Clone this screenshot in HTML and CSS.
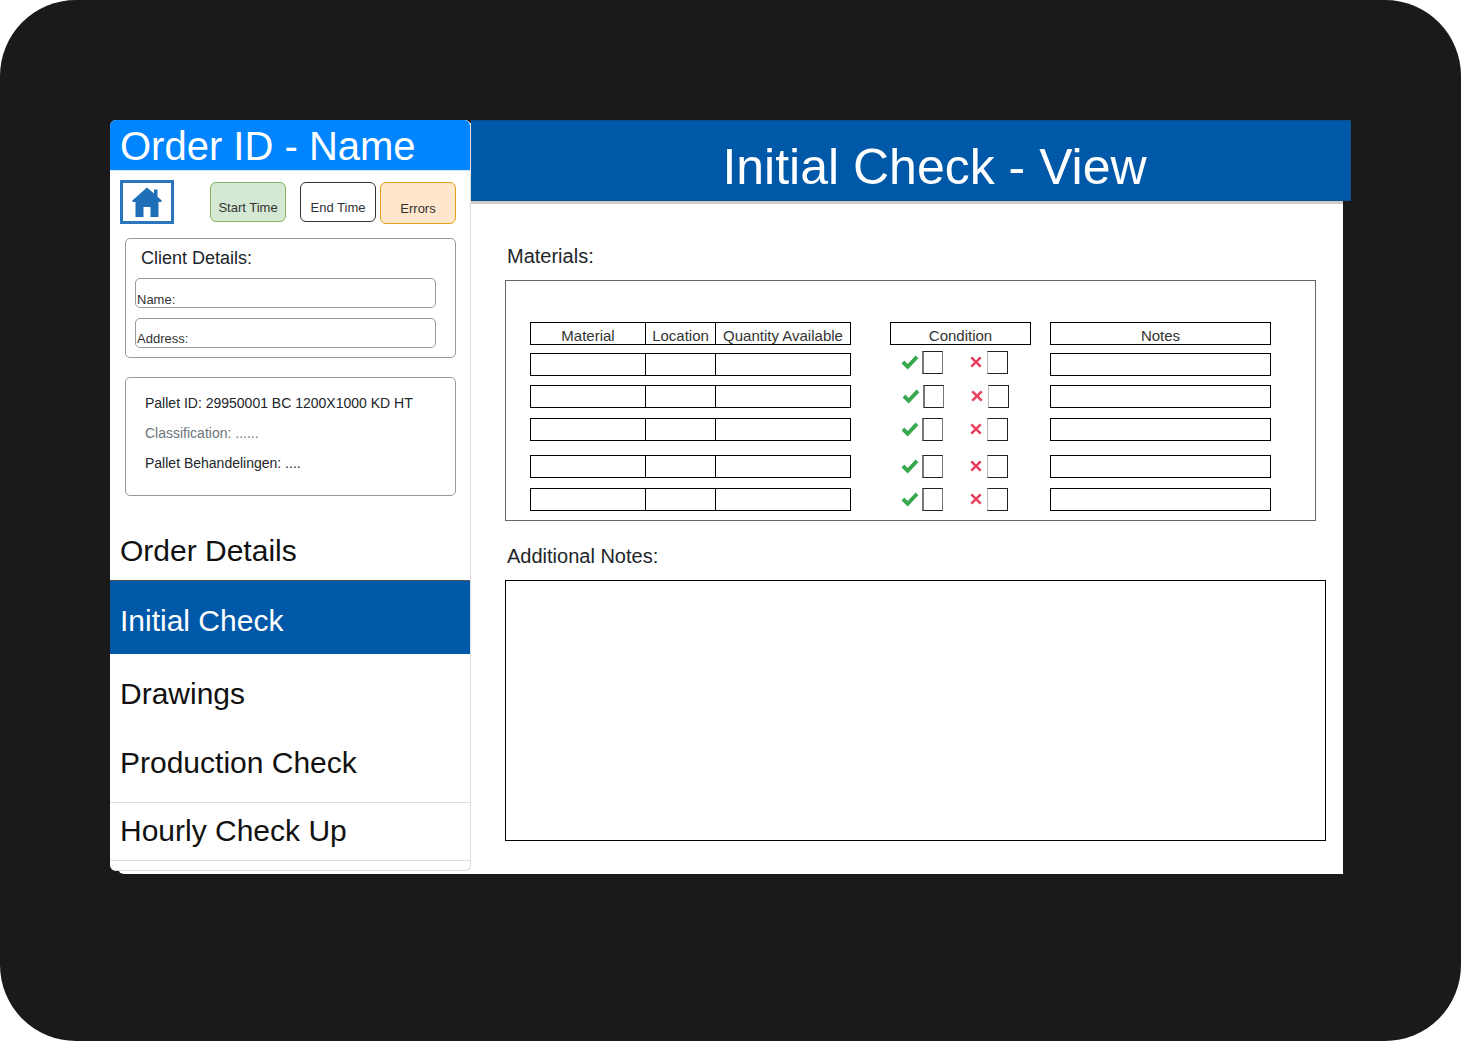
FILE: index.html
```html
<!DOCTYPE html>
<html lang="en">
<head>
    <meta charset="UTF-8">
    <meta name="viewport" content="width=device-width, initial-scale=1.0">
    <title>Initial Check - View</title>
    <link rel="stylesheet" href="styles.css">
</head>
<body>
    <svg class="icon-defs" width="0" height="0" aria-hidden="true">
        <symbol id="icon-check" viewBox="0 0 18 15">
            <path d="M.6 8.4 3.2 5.6 6.7 9 14.6.6 17.4 3.3 6.7 14.6Z"/>
        </symbol>
        <symbol id="icon-cross" viewBox="0 0 12 12">
            <path d="M2.2.4 6 4.2 9.8.4 11.6 2.2 7.8 6 11.6 9.8 9.8 11.6 6 7.8 2.2 11.6.4 9.8 4.2 6 .4 2.2Z"/>
        </symbol>
    </svg>

    <div class="screen">
        <div class="app">
            <!-- Sidebar -->
            <aside class="sidebar">
                <div class="order-title">Order ID - Name</div>

                <div class="toolbar">
                    <a class="home-btn" href="#" aria-label="Home">
                        <svg viewBox="0 0 30 30" width="30" height="30">
                            <path fill="#1f6fb8" d="M15 .5 22 6.6V2.5H25.5V9.7L30 13.8 29 15H26.5V30H18.5V20H11.5V30H3.5V15H1L0 13.8Z"/>
                        </svg>
                    </a>
                    <div class="time-btn start">Start Time</div>
                    <div class="time-btn end">End Time</div>
                    <div class="time-btn errors">Errors</div>
                </div>

                <section class="client-box">
                    <div class="client-title">Client Details:</div>
                    <div class="client-field">Name:</div>
                    <div class="client-field">Address:</div>
                </section>

                <section class="pallet-box">
                    <p>Pallet ID: 29950001 BC 1200X1000 KD HT</p>
                    <p class="muted">Classification: ......</p>
                    <p>Pallet Behandelingen: ....</p>
                </section>

                <nav class="side-nav">
                    <a class="nav-item order" href="#">Order Details</a>
                    <a class="nav-item initial active" href="#">Initial Check</a>
                    <a class="nav-item drawings" href="#">Drawings</a>
                    <a class="nav-item production" href="#">Production Check</a>
                    <a class="nav-item hourly" href="#">Hourly Check Up</a>
                </nav>
            </aside>

            <!-- Main content -->
            <main class="main">
                <h1 class="page-title">Initial Check - View</h1>

                <h2 class="section-label first">Materials:</h2>
                <div class="materials-box">
                    <div class="row head">
                        <div class="cols">
                            <div class="cell c-material">Material</div>
                            <div class="cell c-location">Location</div>
                            <div class="cell c-qty">Quantity Available</div>
                        </div>
                        <div class="cell condition-head">Condition</div>
                        <div class="cell notes">Notes</div>
                    </div>

                    <div class="row">
                        <div class="cols"><div class="cell c-material"></div><div class="cell c-location"></div><div class="cell c-qty"></div></div>
                        <div class="condition lifted">
                            <svg class="tick"><use href="#icon-check"/></svg><span class="box"></span>
                            <svg class="cross"><use href="#icon-cross"/></svg><span class="box"></span>
                        </div>
                        <div class="cell notes"></div>
                    </div>
                    <div class="row">
                        <div class="cols"><div class="cell c-material"></div><div class="cell c-location"></div><div class="cell c-qty"></div></div>
                        <div class="condition nudged">
                            <svg class="tick"><use href="#icon-check"/></svg><span class="box"></span>
                            <svg class="cross"><use href="#icon-cross"/></svg><span class="box"></span>
                        </div>
                        <div class="cell notes"></div>
                    </div>
                    <div class="row">
                        <div class="cols"><div class="cell c-material"></div><div class="cell c-location"></div><div class="cell c-qty"></div></div>
                        <div class="condition">
                            <svg class="tick"><use href="#icon-check"/></svg><span class="box"></span>
                            <svg class="cross"><use href="#icon-cross"/></svg><span class="box"></span>
                        </div>
                        <div class="cell notes"></div>
                    </div>
                    <div class="row">
                        <div class="cols"><div class="cell c-material"></div><div class="cell c-location"></div><div class="cell c-qty"></div></div>
                        <div class="condition">
                            <svg class="tick"><use href="#icon-check"/></svg><span class="box"></span>
                            <svg class="cross"><use href="#icon-cross"/></svg><span class="box"></span>
                        </div>
                        <div class="cell notes"></div>
                    </div>
                    <div class="row">
                        <div class="cols"><div class="cell c-material"></div><div class="cell c-location"></div><div class="cell c-qty"></div></div>
                        <div class="condition">
                            <svg class="tick"><use href="#icon-check"/></svg><span class="box"></span>
                            <svg class="cross"><use href="#icon-cross"/></svg><span class="box"></span>
                        </div>
                        <div class="cell notes"></div>
                    </div>
                </div>

                <h2 class="section-label second">Additional Notes:</h2>
                <div class="notes-box"></div>
            </main>
        </div>
    </div>
</body>
</html>
```

FILE: styles.css
```css
* {
    box-sizing: border-box;
}

html,
body {
    margin: 0;
    background-color: #fff;
}

body {
    font-family: "Liberation Sans", Arial, sans-serif;
    color: #212529;
}

a {
    color: inherit;
    text-decoration: none;
}

.icon-defs {
    position: absolute;
}

.screen {
    width: 1461px;
    height: 1041px;
    padding: 120px 0 0 110px;
    background-color: #1a1a1a;
    border-radius: 76px;
    overflow: hidden;
}

.app {
    display: flex;
    align-items: flex-start;
}

/* Sidebar */
.sidebar {
    width: 361px;
    height: 751px;
    flex: none;
    display: flex;
    flex-direction: column;
    background-color: #fff;
    border-right: 1px solid #ddd;
    border-bottom: 1px solid #ddd;
    border-radius: 6px;
    box-shadow: 8px 3px 0 #fff;
}

.order-title {
    height: 51px;
    padding-left: 10px;
    font-size: 40px;
    line-height: 52px;
    color: #fff;
    background-color: #0085ff;
    border-radius: 6px 6px 0 0;
    border-bottom: 1px solid #cfe6fb;
}

.toolbar {
    display: flex;
    align-items: flex-start;
    height: 67px;
    padding: 9px 0 0 10px;
}

.home-btn {
    width: 54px;
    height: 44px;
    display: flex;
    align-items: center;
    justify-content: center;
    border: 3px solid #2a75bb;
}

.time-btn {
    width: 76px;
    height: 40px;
    margin-top: 2px;
    padding-top: 17px;
    text-align: center;
    font-size: 13px;
    line-height: 15px;
    color: #333;
    border: 1px solid #333;
    border-radius: 6px;
}

.time-btn.start {
    margin-left: 36px;
    background-color: #d5e8d4;
    border-color: #82b366;
}

.time-btn.end {
    margin-left: 14px;
    background-color: #fff;
}

.time-btn.errors {
    height: 42px;
    margin-left: 4px;
    padding-top: 18px;
    background-color: #ffe6cc;
    border-color: #e3a21a;
}

.client-box {
    width: 331px;
    height: 120px;
    margin-left: 15px;
    padding: 0 0 0 9px;
    border: 1px solid #999;
    border-radius: 5px;
}

.client-title {
    height: 39px;
    padding: 9px 0 0 6px;
    font-size: 18px;
    line-height: 21px;
}

.client-field {
    width: 301px;
    height: 30px;
    margin-bottom: 10px;
    padding: 13px 0 0 1px;
    font-size: 13px;
    line-height: 15px;
    color: #333;
    border: 1px solid #999;
    border-radius: 5px;
}

.client-field:last-child {
    padding-top: 12px;
}

.pallet-box {
    width: 331px;
    height: 119px;
    margin: 19px 0 0 15px;
    padding: 17px 0 0 19px;
    font-size: 14px;
    line-height: 16px;
    border: 1px solid #999;
    border-radius: 5px;
}

.pallet-box p {
    margin: 0 0 14px;
}

.pallet-box .muted {
    color: #6c757d;
}

.side-nav {
    display: flex;
    flex-direction: column;
}

.nav-item {
    display: block;
    padding-left: 10px;
    font-size: 30px;
    line-height: 34px;
    color: #111;
}

.nav-item.order {
    height: 84px;
    padding-top: 38px;
}

.nav-item.active {
    height: 74px;
    padding-top: 23px;
    color: #fff;
    background-color: #0058a8;
    border-top: 1px solid #555;
}

.nav-item.drawings {
    height: 79px;
    padding-top: 23px;
}

.nav-item.production {
    height: 69px;
    padding-top: 13px;
}

.nav-item.hourly {
    height: 59px;
    padding-top: 11px;
    border-top: 1px solid #ddd;
    border-bottom: 1px solid #ddd;
}

/* Main */
.main {
    width: 872px;
    height: 754px;
    flex: none;
    background-color: #fff;
}

.page-title {
    width: 880px;
    height: 81px;
    margin: 0;
    padding: 17px 0 0 48px;
    text-align: center;
    font-size: 50px;
    font-weight: normal;
    line-height: 58px;
    color: #fff;
    background-color: #0058a8;
    border-top: 1px solid #0b4c8a;
    border-right: 1px solid #0b4c8a;
    border-bottom: 1px solid #0b4c8a;
}

.section-label {
    margin: 0;
    padding-left: 36px;
    font-size: 20px;
    font-weight: normal;
    line-height: 24px;
}

.section-label.first {
    padding-top: 40px;
    border-top: 3px solid #ccc;
}

.section-label.second {
    margin-top: 23px;
}

.materials-box {
    width: 811px;
    height: 241px;
    margin: 12px 0 0 34px;
    padding: 41px 0 0 24px;
    border: 1px solid #666;
}

.row {
    display: flex;
    height: 23px;
    margin-top: 9px;
}

.row.head {
    margin-top: 0;
}

.row:nth-child(2) {
    margin-top: 8px;
}

.row:nth-child(4),
.row:nth-child(6) {
    margin-top: 10px;
}

.row:nth-child(5) {
    margin-top: 14px;
}

.cols {
    display: flex;
    width: 321px;
    border: 1px solid #000;
}

.cols .cell {
    height: 100%;
    border: 0;
}

.cell {
    font-size: 15px;
    line-height: 16px;
    padding-top: 5px;
    text-align: center;
    color: #333;
    border: 1px solid #000;
    white-space: nowrap;
}

.c-material {
    width: 115px;
    border-right: 1px solid #000 !important;
}

.c-location {
    width: 70px;
    border-right: 1px solid #000 !important;
}

.c-qty {
    width: 134px;
}

.condition-head {
    width: 141px;
    margin-left: 39px;
}

.notes {
    width: 221px;
    margin-left: 19px;
}

.condition {
    display: flex;
    align-items: center;
    width: 141px;
    margin-left: 39px;
    padding-left: 11px;
}

.condition.lifted {
    margin-top: -2px;
    height: 23px;
}

.condition.nudged {
    padding-left: 12px;
}

.tick {
    width: 18px;
    height: 15px;
    margin-top: -1px;
    fill: #38a84f;
}

.cross {
    width: 12px;
    height: 12px;
    margin: -2px 0 0 27px;
    fill: #e8405f;
}

.box {
    width: 21px;
    height: 23px;
    flex: none;
    margin-left: 3px;
    border: 1px solid #222;
    border-left: 2px solid #777;
    border-right-color: #777;
}

.cross + .box {
    margin-left: 5px;
    border-left: 1px solid #bbb;
    border-right-color: #222;
}

.notes-box {
    width: 821px;
    height: 261px;
    margin: 12px 0 0 34px;
    border: 1px solid #000;
}
```
